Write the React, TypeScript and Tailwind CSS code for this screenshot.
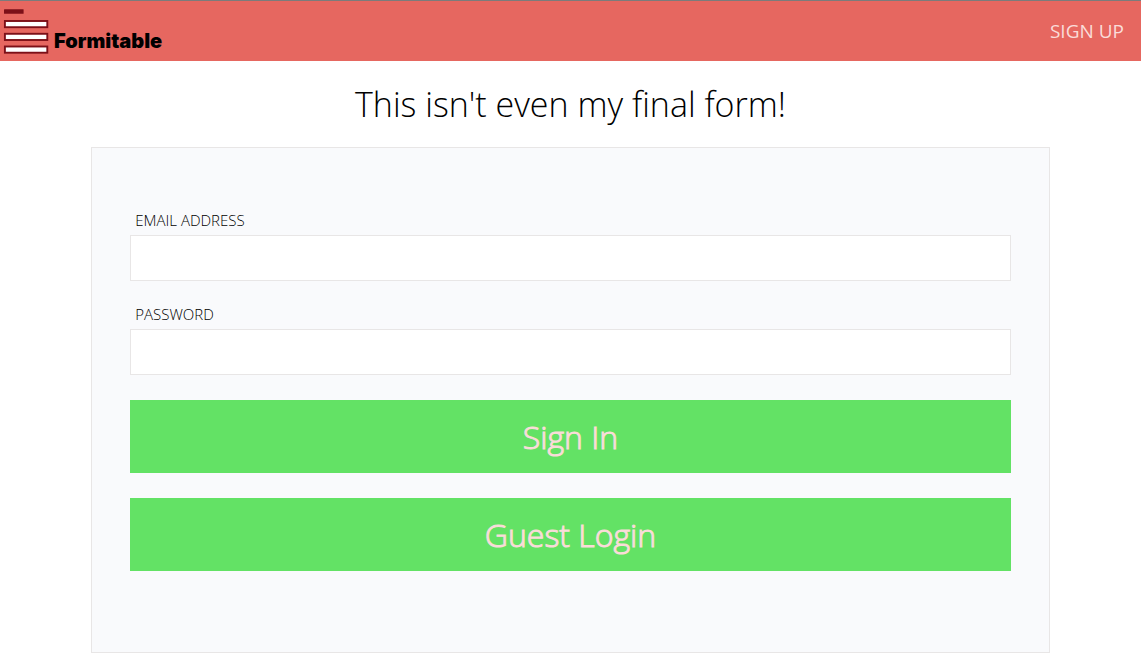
import React from "react";

function Logo() {
  return (
    <a href="#home" className="flex items-end text-black" aria-label="Formitable">
      <svg width="50" height="60" viewBox="0 0 50 60" aria-hidden="true">
        <rect x="4" y="8.2" width="19.6" height="4.6" rx="0.5" fill="#7c1018" />
        <g fill="#ffffff" stroke="#7c1018" strokeWidth="1.9">
          <rect x="4.9" y="20" width="42.4" height="6.2" />
          <rect x="4.9" y="32.8" width="42.4" height="6.2" />
          <rect x="4.9" y="45.5" width="42.4" height="6.2" />
        </g>
      </svg>
      <span className="pb-2 pl-1 font-['Inter',sans-serif] text-xl leading-6 font-black">Formitable</span>
    </a>
  );
}

type FieldProps = { id: string; label: string; type: string };

function Field({ id, label, type }: FieldProps) {
  return (
    <div className="flex flex-col">
      <label htmlFor={id} className="pb-1 pl-[5px] text-[15px] leading-[22px] text-black">
        {label}
      </label>
      <input id={id} type={type} className="h-[46px] w-full border border-[#e8e6e6] bg-white px-3 text-base outline-none" />
    </div>
  );
}

const buttonClass =
  "h-[73px] w-full bg-[#63e265] text-[32px] leading-[46px] font-light text-[#fadcd9] [-webkit-text-stroke:1px_#fadcd9]";

export default function App() {
  return (
    <div className="min-h-screen bg-white font-['Open_Sans',sans-serif] font-light text-black">
      <header className="flex h-[61px] items-center justify-between border-t border-[#7b7b7b] bg-[#e66760] pr-[17px]">
        <Logo />
        <a href="#signup" className="text-[19px] font-normal text-[#fadcd9]">SIGN UP</a>
      </header>
      <main className="mx-auto w-[84%] pb-4">
        <h1 className="pt-[19px] pb-[19px] text-center text-[34px] leading-[48px] font-light">This isn't even my final form!</h1>
        <form className="flex flex-col gap-[25px] border border-[#e8e6e6] bg-[#f9fafc] px-[38px] pt-[61px] pb-[81px]">
          <div className="flex flex-col gap-[22px]">
            <Field id="email" label="EMAIL ADDRESS" type="email" />
            <Field id="password" label="PASSWORD" type="password" />
          </div>
          <button type="submit" className={buttonClass}>Sign In</button>
          <button type="button" className={buttonClass}>Guest Login</button>
        </form>
      </main>
    </div>
  );
}
